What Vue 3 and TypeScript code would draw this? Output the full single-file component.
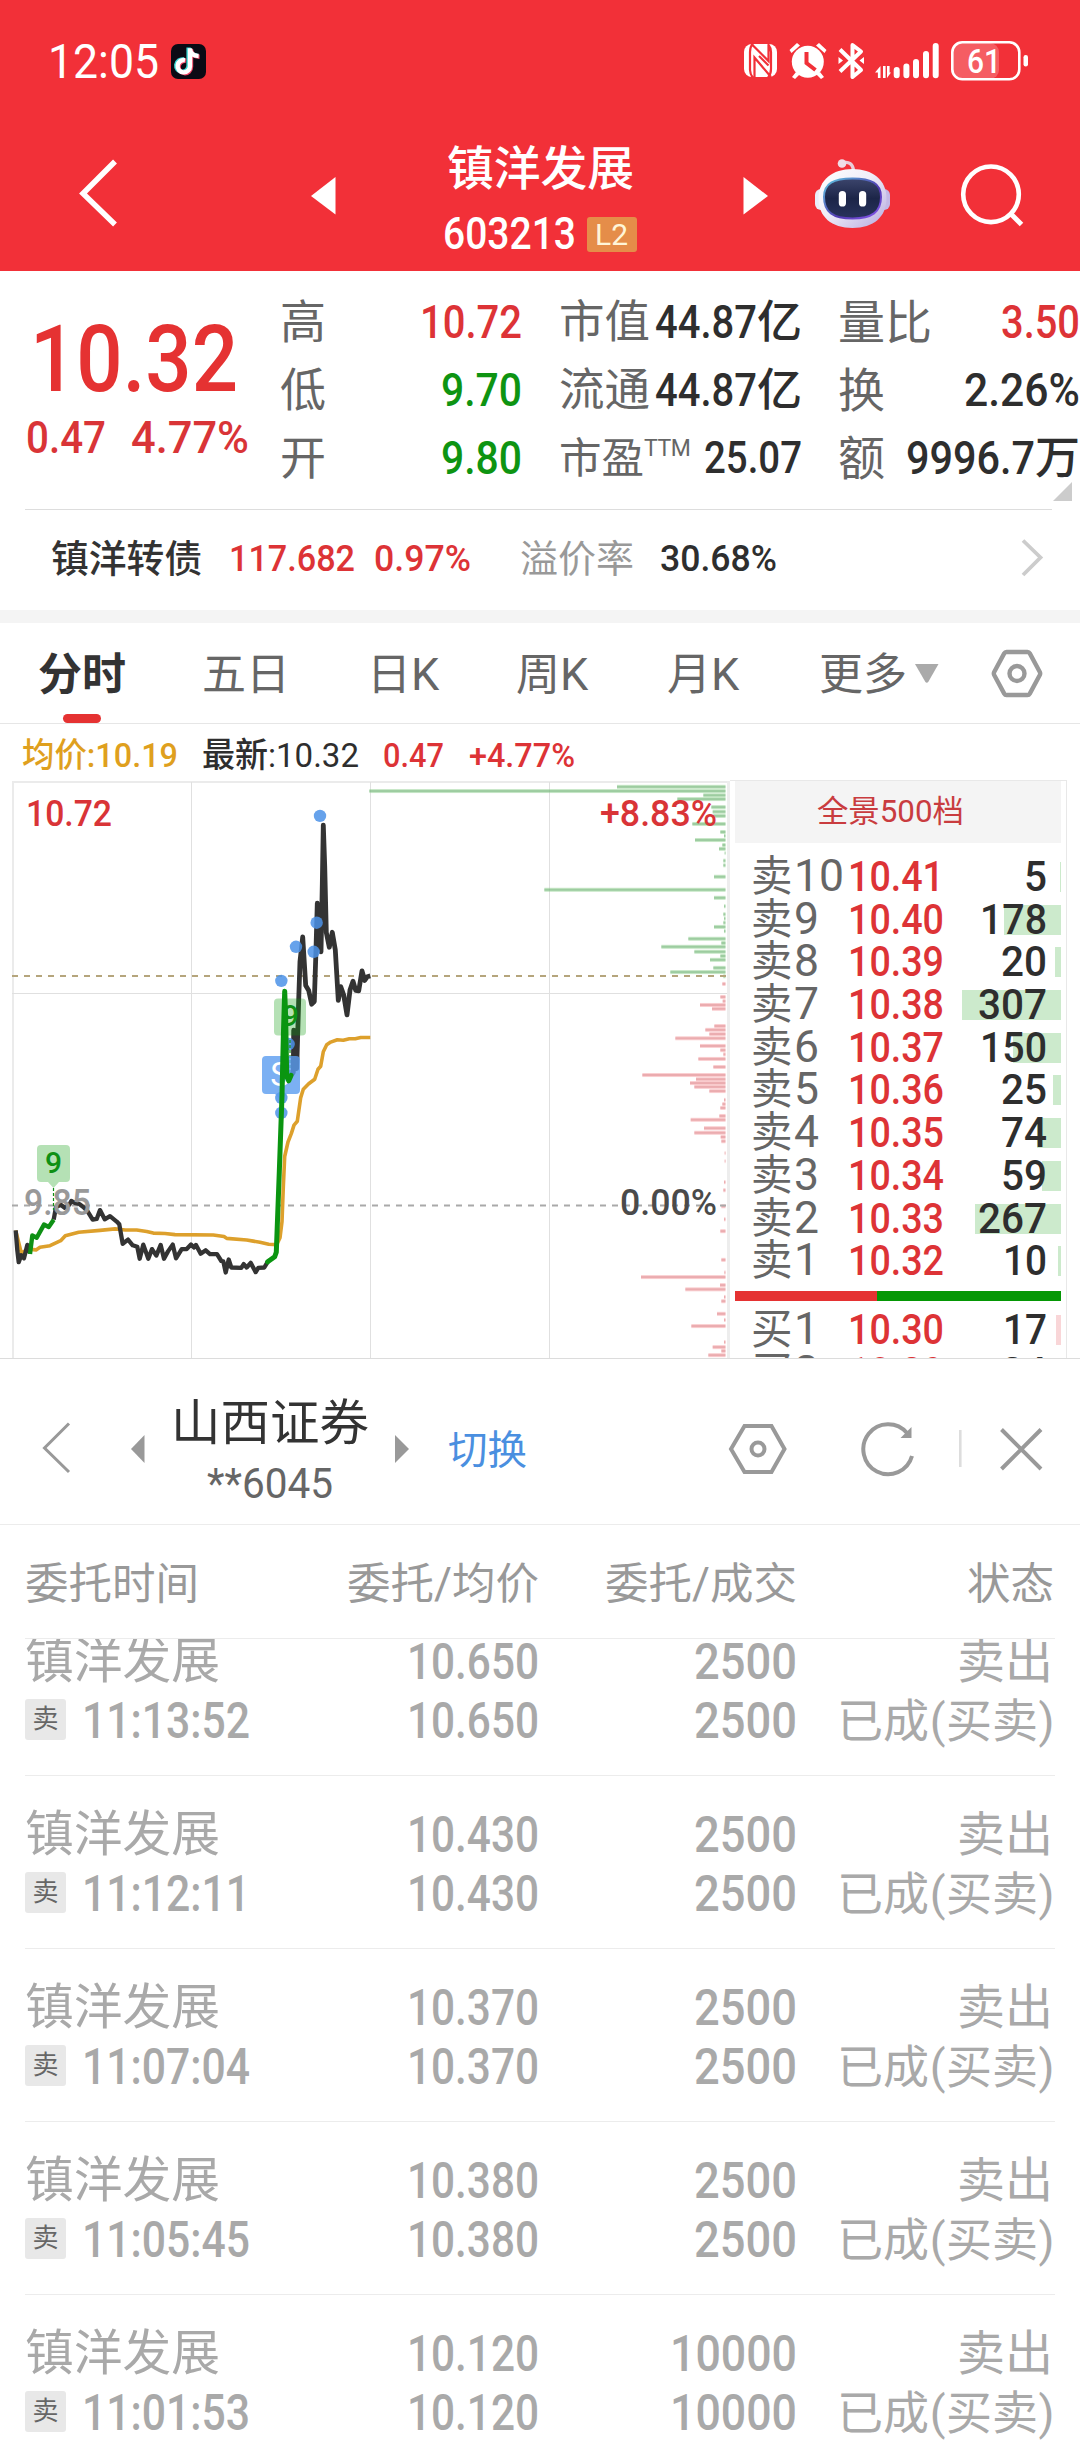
<script setup lang="ts">
interface Stat { label: string; value: string; width: number; tone: string; unit?: string; sup?: string; size?: number }
interface Level { side: string; no: string; noWidth: number; price: string; qty: string; qtyWidth: number; bar: number }
interface Order { time: string; price: string; qty: string; priceWidth: number; qtyWidth: number }

// Condenses a run of text horizontally so that it takes exactly the given width.
const vFit = {
  mounted(el: HTMLElement, binding: { value: number }) {
    const natural = el.getBoundingClientRect().width
    el.style.transform = `scaleX(${binding.value / natural})`
    el.style.marginRight = `${binding.value - natural}px`
  },
}

const columns: Stat[][] = [
  [
    { label: '高', value: '10.72', width: 102, tone: 'up' },
    { label: '低', value: '9.70', width: 81, tone: 'down' },
    { label: '开', value: '9.80', width: 81, tone: 'down' },
  ],
  [
    { label: '市值', value: '44.87', width: 102, tone: 'flat', unit: '亿' },
    { label: '流通', value: '44.87', width: 102, tone: 'flat', unit: '亿' },
    { label: '市盈', value: '25.07', width: 98, tone: 'flat', sup: 'TTM', size: 44 },
  ],
  [
    { label: '量比', value: '3.50', width: 79, tone: 'up' },
    { label: '换', value: '2.26%', width: 116, tone: 'flat' },
    { label: '额', value: '9996.7', width: 129, tone: 'flat', unit: '万' },
  ],
]

const sells: Level[] = [
  { side: '卖', no: '10', noWidth: 50, price: '10.41', qty: '5', qtyWidth: 23, bar: 1 },
  { side: '卖', no: '9', noWidth: 25, price: '10.40', qty: '178', qtyWidth: 67, bar: 57 },
  { side: '卖', no: '8', noWidth: 25, price: '10.39', qty: '20', qtyWidth: 46, bar: 6 },
  { side: '卖', no: '7', noWidth: 25, price: '10.38', qty: '307', qtyWidth: 69, bar: 99 },
  { side: '卖', no: '6', noWidth: 25, price: '10.37', qty: '150', qtyWidth: 67, bar: 48 },
  { side: '卖', no: '5', noWidth: 25, price: '10.36', qty: '25', qtyWidth: 46, bar: 8 },
  { side: '卖', no: '4', noWidth: 25, price: '10.35', qty: '74', qtyWidth: 46, bar: 24 },
  { side: '卖', no: '3', noWidth: 25, price: '10.34', qty: '59', qtyWidth: 46, bar: 19 },
  { side: '卖', no: '2', noWidth: 25, price: '10.33', qty: '267', qtyWidth: 69, bar: 86 },
  { side: '卖', no: '1', noWidth: 25, price: '10.32', qty: '10', qtyWidth: 44, bar: 3 },
]
const buys: Level[] = [
  { side: '买', no: '1', noWidth: 25, price: '10.30', qty: '17', qtyWidth: 44, bar: 5 },
  { side: '买', no: '2', noWidth: 25, price: '10.29', qty: '24', qtyWidth: 46, bar: 8 },
]

const orders: Order[] = [
  { time: '11:13:52', price: '10.650', qty: '2500', priceWidth: 132, qtyWidth: 103 },
  { time: '11:12:11', price: '10.430', qty: '2500', priceWidth: 132, qtyWidth: 103 },
  { time: '11:07:04', price: '10.370', qty: '2500', priceWidth: 132, qtyWidth: 103 },
  { time: '11:05:45', price: '10.380', qty: '2500', priceWidth: 132, qtyWidth: 103 },
  { time: '11:01:53', price: '10.120', qty: '10000', priceWidth: 132, qtyWidth: 127 },
]

// Chart samples are stored on a 3 : 2.613 grid and scaled down when drawn.
const sx = (x: number) => x / 3
const sy = (y: number) => y / 2.613 - 10
const toPath = (src: string) =>
  src.split(' ').map((p) => {
    const [x, y] = p.split(',').map(Number)
    return `${sx(x).toFixed(1)},${sy(y).toFixed(1)}`
  }).join(' ')

const earlyLine = toPath('47,1203 52,1255 56,1286 64,1268 72,1276 82,1241 90,1262')
const greenStart = toPath('90,1265 97,1216 110,1222 132,1188 146,1194 161,1175')
const middleLine = toPath('161,1175 168,1142 182,1136 194,1144 208,1136 214,1126 224,1131 238,1134 250,1142 262,1152 278,1175 290,1173 300,1150 314,1174 330,1166 350,1180 358,1187 368,1238 384,1227 398,1242 412,1246 419,1277 430,1240 445,1277 456,1252 469,1269 482,1241 492,1277 504,1258 518,1240 528,1276 545,1252 560,1252 573,1240 582,1248 588,1241 602,1264 617,1255 630,1265 651,1265 664,1283 670,1284 677,1313 686,1279 694,1300 724,1301 731,1291 740,1300 752,1288 767,1312 775,1301 793,1300 803,1285')
const greenRise = toPath('803,1285 824,1272 829,1260 838,1050 846,850 850,700 854,578 857,650 860,800 866,812 873,798')
const lateLine = toPath('875,796 880,790 881,680 886,700 890,780 896,600 900,500 908,436 917,563 926,576 935,612 943,605 948,470 952,348 957,400 963,475 967,300 970,144 974,250 979,425 988,463 997,424 1006,470 1015,602 1022,566 1031,588 1041,640 1050,575 1059,552 1067,576 1076,577 1086,525 1094,550 1102,540 1111,538')
const avgLine = toPath('47,1203 64,1262 85,1252 108,1254 120,1247 150,1243 182,1230 196,1217 236,1208 300,1203 345,1199 376,1202 410,1202 440,1206 460,1210 495,1211 525,1214 640,1215 672,1219 680,1224 740,1228 760,1231 780,1234 806,1239 830,1240 840,1222 846,1180 850,1090 854,1010 864,972 874,950 882,928 892,918 902,856 910,834 926,820 944,808 954,782 962,774 970,736 980,718 992,711 1012,705 1030,706 1048,702 1066,702 1082,699 1111,699')

const dots = [[960, 120], [950, 399], [941, 475], [888, 462], [844, 551], [866, 716], [844, 857], [844, 896]]

const greenBars = [[741, 44], [-2, 55], [1000, 66], [922, 76], [1024, 97], [1028, 109], [1030, 120], [967, 141], [1051, 162], [1062, 172], [975, 183], [1057, 196], [1047, 206], [1064, 217], [1060, 237], [1060, 249], [1032, 279], [523, 313], [1032, 334], [1062, 356], [1060, 377], [1062, 388], [1060, 399], [1032, 410], [1062, 421], [955, 441], [1054, 452], [874, 462], [973, 475], [1051, 486], [1020, 496], [1030, 517], [901, 528], [1060, 539]]
const redBars = [[1057, 559], [1051, 593], [1058, 604], [990, 614], [1026, 624], [1033, 669], [1006, 679], [1018, 690], [916, 701], [990, 721], [1051, 732], [1060, 743], [985, 755], [1030, 776], [817, 797], [978, 808], [960, 818], [973, 828], [1018, 839], [1062, 862], [1057, 873], [1051, 883], [1048, 904], [962, 914], [1002, 936], [973, 948], [1052, 959], [1054, 970], [1064, 1001], [1064, 1022], [1062, 1077], [1060, 1098], [1054, 1140], [1062, 1174], [1051, 1205], [1054, 1280], [1063, 1313], [813, 1325], [1050, 1346], [946, 1357], [1062, 1377], [1054, 1388], [1041, 1421], [1062, 1437], [964, 1453], [1062, 1495], [1028, 1508], [1054, 1518], [1015, 1529]]
const barX = (x: number) => 370 + x / 3
</script>

<template>
  <div class="page">
    <header class="top">
      <div class="status">
        <span class="clock"><span v-fit="111" class="fit">12:05</span></span>
        <svg class="tiktok" width="36" height="36" viewBox="0 0 36 36">
          <rect width="35" height="35" rx="7" fill="#0b0a14" />
          <g fill="none" stroke-width="4.4">
            <path d="M18.4 4V22a6.2 6.2 0 1 1-5-6.1M18.4 5c.6 4.6 4 6.6 8.6 6.8" stroke="#39d7d4" transform="translate(-.8 -.4)" />
            <path d="M18.4 4V22a6.2 6.2 0 1 1-5-6.1M18.4 5c.6 4.6 4 6.6 8.6 6.8" stroke="#ef4565" transform="translate(1.6 1)" />
            <path d="M18.4 4V22a6.2 6.2 0 1 1-5-6.1M18.4 5c.6 4.6 4 6.6 8.6 6.8" stroke="#fff" transform="translate(.6 .2)" />
          </g>
        </svg>
        <svg class="sys" width="290" height="44" viewBox="740 39 290 44">
          <rect x="744" y="44" width="33" height="33" rx="8" fill="#fff" />
          <g stroke="#f13038" fill="none" stroke-width="2.2">
            <path d="M753 43q-3 4-3 9v18q0 4 3 8M752 44.500L768.500 61V45M768 78q3-4 3-9V52q0-4-3-8M754.500 78V57.500L771 77" />
            <path d="M759 56l9.500 9.500" />
          </g>
          <g fill="#fff">
            <circle cx="807.8" cy="61.8" r="16" />
            <path d="M789.500 50l7.500-7 3 2.500-8.500 7.500zM826.500 50l-7.500-7-3 2.500 8.500 7.500z" />
            <path d="M796 72l-4 5 3 2 5-5zM820 72l4 5-3 2-5-5z" />
          </g>
          <path d="M806.500 52v11l9 7" fill="none" stroke="#f13038" stroke-width="4" />
          <g fill="none" stroke="#fff" stroke-width="4" stroke-linejoin="round">
            <path d="M840 49.500l21 20.500-8.500 7V45l8.500 6.500-21 20" />
          </g>
          <path d="M838.500 57v7l4.500-3.500zM864 57v7l-4.500-3.500z" fill="#fff" />
          <path d="M880.500 66v12h-2.600v-5.500H875zM883 66h2.600v12H883zM887 66h2.600v6.500h1.400l-4 5.500z" fill="#fff" />
          <g stroke="#fff" stroke-width="6" stroke-linecap="round">
            <path d="M896.700 70v5.300M906.400 66.500v8.800M916 62v13.300M926 54v21.300M935.700 46v29.300" />
          </g>
          <rect x="953" y="43" width="46" height="36" rx="9" fill="#fff" opacity=".22" />
          <rect x="952.300" y="42.300" width="67" height="37" rx="10" fill="none" stroke="#fff" stroke-width="2.600" />
          <rect x="1023.500" y="55" width="4.500" height="11.500" rx="2.200" fill="#fff" />
          <text x="967" y="72.600" class="batt" textLength="34" lengthAdjust="spacingAndGlyphs">61</text>
        </svg>
      </div>
      <div class="nav">
        <svg class="nav-back" width="40" height="72" viewBox="0 0 40 72"><path d="M37 4.500L5 36.500l32 31" fill="none" stroke="#fff" stroke-width="5.500" /></svg>
        <svg class="nav-prev" width="25" height="38" viewBox="0 0 25 38"><path d="M24.500 0v37.500L0 19z" fill="#fff" /></svg>
        <div class="title">
          <div class="title-name"><span v-fit="187" class="fit">镇洋发展</span></div>
          <div class="title-code">
            <span v-fit="133" class="fit">603213</span>
            <span class="l2"><span v-fit="33" class="fit">L2</span></span>
          </div>
        </div>
        <svg class="nav-next" width="25" height="38" viewBox="0 0 25 38"><path d="M.5 0v37.500L25 19z" fill="#fff" /></svg>
        <svg class="robot" width="78" height="72" viewBox="814 158 78 72">
          <defs>
            <linearGradient id="shell" x1="0" y1="0" x2="1" y2="1"><stop offset="0" stop-color="#fff" /><stop offset=".45" stop-color="#f0eef8" /><stop offset="1" stop-color="#b5a9df" /></linearGradient>
            <linearGradient id="rim" x1="0" y1="0" x2="1" y2="1"><stop offset="0" stop-color="#5fc8e0" /><stop offset=".6" stop-color="#5138b0" /><stop offset="1" stop-color="#8a5af0" /></linearGradient>
            <linearGradient id="face" x1="0" y1="0" x2="0" y2="1"><stop offset="0" stop-color="#3c456c" /><stop offset=".5" stop-color="#1c2548" /><stop offset="1" stop-color="#28335c" /></linearGradient>
          </defs>
          <path d="M842 163c7-2 11 1 11.500 8" fill="none" stroke="#e9cdd9" stroke-width="3.400" />
          <circle cx="842" cy="163.500" r="4.300" fill="#f0dde6" />
          <rect x="815" y="189" width="14" height="21" rx="6" fill="#e9edfa" />
          <rect x="876" y="189" width="14" height="21" rx="6" fill="#c3b8e6" />
          <path d="M852.500 169c20 0 34 11 34 29 0 19-13 30-34 30s-34-11-34-30c0-18 14-29 34-29z" fill="url(#shell)" />
          <path d="M852.500 178.500c19 0 28.500 5 28.500 18.500 0 15-9 21.500-28.500 21.500S824 212 824 197c0-13.500 9.500-18.500 28.500-18.500z" fill="url(#face)" stroke="url(#rim)" stroke-width="2" />
          <rect x="838.800" y="191" width="7.200" height="15.500" rx="3.600" fill="#fff" />
          <rect x="859" y="191" width="7.200" height="15.500" rx="3.600" fill="#fff" />
        </svg>
        <svg class="search" width="66" height="66" viewBox="959 162 66 66"><circle cx="991" cy="194.300" r="27.800" fill="none" stroke="#fff" stroke-width="4.600" /><path d="M1010.500 213.500l11 11" stroke="#fff" stroke-width="5" /></svg>
      </div>
    </header>

    <section class="quote">
      <div class="last">
        <div class="last-price"><span v-fit="208" class="fit">10.32</span></div>
        <div class="last-change"><span v-fit="80" class="fit">0.47</span><span v-fit="118" class="fit pct">4.77%</span></div>
      </div>
      <div v-for="(col, c) in columns" :key="c" class="stats" :class="'stats-' + c">
        <div v-for="s in col" :key="s.label" class="stat">
          <span class="stat-label" :class="{ small: s.sup }">{{ s.label }}<sup v-if="s.sup">{{ s.sup }}</sup></span>
          <span class="stat-value" :class="s.tone" :style="{ fontSize: (s.size ?? 46.5) + 'px' }">
            <span v-fit="s.width" class="fit">{{ s.value }}</span><i v-if="s.unit">{{ s.unit }}</i>
          </span>
        </div>
      </div>
      <svg class="corner" width="19" height="19" viewBox="0 0 19 19"><path d="M19 0v19H0z" fill="#ccc" /></svg>
    </section>

    <section class="bond">
      <span class="bond-name">镇洋转债</span>
      <span v-fit="126" class="fit bond-num up bond-a">117.682</span>
      <span v-fit="97" class="fit bond-num up bond-b">0.97%</span>
      <span class="bond-rate">溢价率</span>
      <span v-fit="117" class="fit bond-num flat bond-c">30.68%</span>
      <svg class="bond-go" width="24" height="40" viewBox="0 0 24 40"><path d="M3 2.500l17.500 17L3 37" fill="none" stroke="#ccc" stroke-width="3.800" /></svg>
    </section>

    <nav class="tabs">
      <span class="tab active">分时</span>
      <span class="tab t2">五日</span>
      <span class="tab t3">日<b>K</b></span>
      <span class="tab t4">周<b>K</b></span>
      <span class="tab t5">月<b>K</b></span>
      <span class="tab t6">更多<svg width="24" height="20" viewBox="0 0 24 20"><path d="M0 0h23.500L13.500 17.500q-1.700 2.500-3.400 0z" fill="#aaa" /></svg></span>
      <svg class="gear" width="52" height="50" viewBox="0 0 52 50"><path d="M15.500 3h21q1.500 0 2.300 1.400l10 18.500q.8 1.600 0 3.200l-10 18.500Q38 46 36.500 46h-21q-1.500 0-2.300-1.400l-10-18.500q-.8-1.600 0-3.200l10-18.500Q14 3 15.500 3z" fill="none" stroke="#999" stroke-width="4.400" /><circle cx="26" cy="24.500" r="7.500" fill="none" stroke="#999" stroke-width="4.400" /></svg>
    </nav>

    <div class="info">
      <span v-fit="156" class="fit gold">均价:10.19</span>
      <span v-fit="157" class="fit flat i2">最新:10.32</span>
      <span v-fit="61" class="fit up i3">0.47</span>
      <span v-fit="106" class="fit up i4">+4.77%</span>
    </div>

    <section class="market">
      <svg class="chart" width="730" height="578" viewBox="0 0 730 578">
        <g stroke="#e0e0e0" stroke-width="1">
          <path d="M12 2H728M13 1V578" stroke="#ebebeb" stroke-width="2" />
          <path d="M191.500 2V578M370.500 2V578M549.500 2V578M12 213.500H728" />
          <path d="M728.500 1V578" stroke="#ededed" stroke-width="3" />
        </g>
        <g v-for="b in greenBars" :key="'g' + b[1]">
          <rect :x="barX(b[0])" :y="sy(b[1]) - 2" :width="355.500 - b[0] / 3" height="4" fill="#8fd08f" opacity=".5" />
          <rect :x="barX(b[0])" :y="sy(b[1]) - 1" :width="355.500 - b[0] / 3" height="2" fill="#5fa566" opacity=".4" />
        </g>
        <g v-for="b in redBars" :key="'r' + b[1]">
          <rect :x="barX(b[0])" :y="sy(b[1]) - 2" :width="355.500 - b[0] / 3" height="4" fill="#f5a0a4" opacity=".5" />
          <rect :x="barX(b[0])" :y="sy(b[1]) - 1" :width="355.500 - b[0] / 3" height="2" fill="#cf6b70" opacity=".35" />
        </g>
        <path d="M12 196H726" stroke="#b5a57c" stroke-width="2" stroke-dasharray="6 6" />
        <path d="M12 425.500H726" stroke="#a9a9a9" stroke-width="2" stroke-dasharray="6 6" />
        <text x="26" y="46" class="axis up" textLength="86" lengthAdjust="spacingAndGlyphs">10.72</text>
        <text x="600" y="46" class="axis up" textLength="117" lengthAdjust="spacingAndGlyphs">+8.83%</text>
        <text x="620" y="435" class="axis dim" textLength="97" lengthAdjust="spacingAndGlyphs">0.00%</text>
        <g fill="none" stroke-linejoin="round" stroke-linecap="butt">
          <polyline :points="avgLine" stroke="#dda02c" stroke-width="3.600" />
          <g stroke="#333" stroke-width="4.300">
            <polyline :points="earlyLine" />
            <polyline :points="middleLine" />
            <polyline :points="lateLine" stroke-width="4.800" />
          </g>
          <polyline :points="greenStart" stroke="#0e9014" stroke-width="4.400" />
        </g>
        <text x="24" y="435" class="axis gray" textLength="67" lengthAdjust="spacingAndGlyphs">9.85</text>
        <ellipse v-for="d in dots" :key="d.join()" :cx="sx(d[0])" :cy="sy(d[1])" rx="6.200" ry="6.200" fill="#4b92e8" opacity=".85" />
        <path d="M53.500 408V430M290 260V300" stroke="#0e9014" stroke-width="1.200" stroke-dasharray="3 2" />
        <g fill="#0a9a0a" fill-opacity=".3">
          <path d="M41 365h25q4 0 4 4v29q0 4-4 4h-7l-5.500 6-5.500-6h-7q-4 0-4-4v-29q0-4 4-4z" />
          <rect x="274" y="218.500" width="32" height="37" rx="4" />
        </g>
        <text x="53.500" y="392.500" class="mark green">9</text>
        <text x="290.500" y="245.500" class="mark green">9</text>
        <path d="M266 276h30q4 0 4 4v30q0 4-4 4h-9l-6 6-6-6h-9q-4 0-4-4v-30q0-4 4-4z" fill="#5a9cf0" opacity=".8" />
        <text x="280" y="306" class="mark sell">S</text>
        <polyline :points="greenRise" fill="none" stroke="#0a9510" stroke-width="5" stroke-linejoin="round" stroke-linecap="round" />
      </svg>

      <div class="book">
        <div class="book-head"><span v-fit="147" class="fit">全景500档</span></div>
        <div class="levels">
          <div v-for="l in sells" :key="l.no" class="level">
            <span class="lv-name">{{ l.side }}<b v-fit="l.noWidth" class="fit">{{ l.no }}</b></span>
            <span class="lv-price"><span v-fit="96" class="fit">{{ l.price }}</span></span>
            <span class="lv-bar" :style="{ width: l.bar + 'px' }"></span>
            <span class="lv-qty"><span v-fit="l.qtyWidth" class="fit">{{ l.qty }}</span></span>
          </div>
        </div>
        <div class="ratio"><i></i></div>
        <div class="levels buys">
          <div v-for="l in buys" :key="l.no" class="level">
            <span class="lv-name">{{ l.side }}<b v-fit="l.noWidth" class="fit">{{ l.no }}</b></span>
            <span class="lv-price"><span v-fit="96" class="fit">{{ l.price }}</span></span>
            <span class="lv-bar buy" :style="{ width: l.bar + 'px' }"></span>
            <span class="lv-qty"><span v-fit="l.qtyWidth" class="fit">{{ l.qty }}</span></span>
          </div>
        </div>
      </div>
    </section>

    <section class="broker">
      <svg class="bk-back" width="30" height="54" viewBox="0 0 30 54"><path d="M28 2.500L3.500 27 28 51" fill="none" stroke="#999" stroke-width="3" /></svg>
      <svg class="bk-prev" width="14" height="28" viewBox="0 0 14 28"><path d="M13.500 0v28L0 14z" fill="#999" /></svg>
      <div class="bk-name">
        <div class="bk-title"><span v-fit="198" class="fit">山西证券</span></div>
        <div class="bk-acct"><span v-fit="126" class="fit">**6045</span></div>
      </div>
      <svg class="bk-next" width="14" height="28" viewBox="0 0 14 28"><path d="M0 0v28L14 14z" fill="#999" /></svg>
      <span class="bk-switch">切换</span>
      <svg class="bk-tools" width="320" height="60" viewBox="727 1419 320 60">
        <g fill="none" stroke="#999" stroke-width="4">
          <path d="M744.500 1426h27l13 23-13 23h-27l-13.500-23z" />
          <circle cx="758" cy="1449" r="6.500" />
          <path d="M912 1456a24.800 25 0 1 1-5-23" />
          <path d="M1001.500 1429.500l39.500 39.500M1041 1429.500l-39.500 39.500" />
        </g>
        <path d="M911.500 1427v11h-11z" fill="#999" />
        <path d="M960.300 1430v37" stroke="#ddd" stroke-width="2.600" />
      </svg>
    </section>

    <div class="thead">
      <span class="c1">委托时间</span>
      <span class="c2">委托/均价</span>
      <span class="c3">委托/成交</span>
      <span class="c4">状态</span>
    </div>

    <div class="orders">
      <div v-for="o in orders" :key="o.time" class="order">
        <div class="line">
          <span class="c1 stock"><span v-fit="195" class="fit">镇洋发展</span></span>
          <span class="c2"><span v-fit="o.priceWidth" class="fit">{{ o.price }}</span></span>
          <span class="c3"><span v-fit="o.qtyWidth" class="fit">{{ o.qty }}</span></span>
          <span class="c4 act">卖出</span>
        </div>
        <div class="line second">
          <span class="c1"><i class="tag">卖</i><span v-fit="168" class="fit">{{ o.time }}</span></span>
          <span class="c2"><span v-fit="o.priceWidth" class="fit">{{ o.price }}</span></span>
          <span class="c3"><span v-fit="o.qtyWidth" class="fit">{{ o.qty }}</span></span>
          <span class="c4 done">已成<em>(</em>买卖<em>)</em></span>
        </div>
      </div>
    </div>
  </div>
</template>

<style>
body { background: #fff; }
</style>

<style scoped>
* { box-sizing: border-box; }
i, em { font-style: normal; }
svg { display: block; flex: none; }
.page {
  width: 1080px; height: 2440px; overflow: hidden; background: #fff; display: flex; flex-direction: column;
  font-family: Roboto, "Noto Sans CJK SC", sans-serif; color: #333; white-space: nowrap;
}
.page > * { flex: none; }
.fit { display: inline-block; transform-origin: 0 50%; white-space: nowrap; }
.up { color: #dd3336; fill: #d93437; }
.down { color: #0e9412; }
.flat { color: #2e2e2e; }

.top { height: 271px; background: #f23038; color: #fff; }
.status { height: 123px; display: flex; align-items: center; padding-left: 48px; }
.clock { font-size: 47.500px; line-height: 50px; width: 123px; font-weight: 450; padding-top: 1px; }
.sys { margin-left: 533px; margin-top: -1px; }
.batt { font: 500 34px Roboto, sans-serif; fill: #fff; }
.nav { height: 148px; display: flex; }
.nav-back { margin: 34px 0 0 78px; }
.nav-prev { margin: 54px 0 0 193px; }
.title { width: 407px; display: flex; flex-direction: column; align-items: center; }
.title-name { margin-top: 16px; font-size: 47px; line-height: 60px; font-weight: 500; padding-left: 2px; }
.title-code { margin-top: 5px; font-size: 44px; line-height: 60px; font-weight: 500; display: flex; align-items: center; }
.l2 { margin-left: 11px; width: 50px; height: 35px; border-radius: 3px; background: #e58d49; color: #fff5d8; font-size: 29px; line-height: 36px; font-weight: 400; text-align: center; }
.nav-next { margin: 54px 0 0 0; }
.robot { margin: 35px 0 0 46px; }
.search { margin: 39px 0 0 67px; }

.quote { height: 239px; display: flex; position: relative; }
.quote::after { content: ""; position: absolute; left: 25px; bottom: 0; width: 1027px; height: 1px; background: #ddd; }
.last { width: 280px; padding-left: 25px; }
.last-price { margin: 39px 0 0 5px; height: 100px; line-height: 100px; font-size: 93px; font-weight: 500; color: #e53232; }
.last-change { height: 60px; margin-top: -2px; line-height: 60px; font-size: 45px; font-weight: 500; color: #d93437; padding-left: 1px; }
.pct { margin-left: 25px; }
.stats { padding-top: 18px; }
.stats-0 { width: 242px; }
.stats-1 { width: 243px; margin-left: 37px; }
.stats-2 { width: 242px; margin-left: 36px; }
.stat { height: 67.700px; display: flex; justify-content: space-between; align-items: center; line-height: 67px; }
.stat-label { font-size: 46px; color: #666; }
.stats-1 .stat-label { font-size: 45.500px; }
.stats-1 .stat-label.small { font-size: 42.500px; }
.stats-2 .stat-label { font-size: 47px; }
sup { font-size: 23px; line-height: 1; vertical-align: 17px; font-weight: 400; letter-spacing: -.5px; }
.stat-value { font-weight: 500; display: flex; }
.stat-value i { font-size: 45px; font-weight: 500; }
.corner { position: absolute; right: 8px; bottom: 9px; }

.bond { height: 100px; padding: 0 36px 5px 51px; display: flex; align-items: center; }
.bond-name { font-size: 37.800px; width: 178px; font-weight: 500; margin-top: -4px; }
.bond-num { font-size: 37.500px; font-weight: 500; padding-top: 1px; }
.bond-b { margin-left: 19px; }
.bond-rate { font-size: 38px; color: #999; margin: -4px 0 0 49px; width: 140px; }
.bond-go { margin-left: auto; }

.tabs { height: 114px; border-top: 13px solid #f4f4f4; border-bottom: 1px solid #e6e6e6; display: flex; align-items: center; font-size: 44px; color: #666; line-height: 60px; padding-top: 3px; }
.tab { position: relative; }
.tab b { font-weight: 400; font-size: 45px; }
.active { margin-left: 38px; width: 164px; color: #333; font-weight: 700; }
.active::after { content: ""; position: absolute; left: 25px; top: 69px; width: 38px; height: 9px; border-radius: 5px; background: #e53232; }
.t2 { width: 165px; }
.t3 { width: 149px; }
.t4 { width: 151px; }
.t5 { width: 152px; }
.t6 { width: 172px; display: flex; align-items: center; }
.t6 svg { margin-left: 8px; margin-top: -2px; }
.gear { margin-top: -2px; }

.info { height: 56px; padding: 6px 0 0 22px; display: flex; align-items: center; font-size: 34px; line-height: 44px; font-weight: 500; }
.gold { color: #dfa01e; }
.i2 { margin-left: 24px; font-weight: 450; }
.i3 { margin-left: 24px; }
.i4 { margin-left: 25px; }

.market { height: 579px; border-bottom: 1px solid #dcdcdc; display: flex; overflow: hidden; }
.axis { font: 500 37px Roboto, sans-serif; }
.dim { fill: #4a4a4a; }
.gray { fill: #999; }
.mark { font: 500 30px Roboto, sans-serif; text-anchor: middle; }
.green { fill: #0e9014; }
.sell { fill: #fff; font-size: 33px; font-weight: 400; }
.book { width: 337px; border-top: 1px solid #e8e8e8; border-right: 1px solid #e8e8e8; padding: 0 5px; }
.book-head { height: 62px; background: #f4f4f4; color: #c93c3f; font-size: 31px; line-height: 61px; padding-left: 82px; }
.levels { padding-top: 12px; }
.level { height: 42.700px; line-height: 42.700px; position: relative; display: flex; font-size: 43px; }
.lv-name { width: 113px; padding-left: 16px; font-size: 41.500px; color: #666; }
.lv-name b { font-weight: 400; font-size: 44px; margin-left: 1px; }
.lv-price { color: #dd3336; font-weight: 500; }
.lv-qty { position: absolute; right: 14px; top: 0; font-weight: 500; color: #2e2e2e; }
.lv-bar { position: absolute; right: 0; top: 7px; height: 30px; background: #cceacc; }
.lv-bar.buy { background: #f9d6d8; }
.ratio { margin-top: 9px; height: 10px; background: #059705; display: flex; }
.ratio i { width: 142px; background: #e53232; }
.buys { padding-top: 7px; }

.broker { height: 166px; border-bottom: 1px solid #ececec; display: flex; align-items: center; padding-left: 41px; }
.bk-back { margin-top: 12px; }
.bk-prev { margin: 15px 0 0 60px; }
.bk-name { width: 250px; text-align: center; padding-top: 22px; }
.bk-title { font-size: 49px; line-height: 56px; color: #333; }
.bk-acct { font-size: 42px; line-height: 50px; margin-top: 7px; color: #666; }
.bk-next { margin-top: 15px; }
.bk-switch { font-size: 39.500px; color: #4a8fe0; margin: 9px 0 0 39px; width: 279px; }
.bk-tools { margin-top: 14px; }

.thead { height: 114px; margin: 0 25px; padding-bottom: 3px; border-bottom: 1px solid #ececec; display: flex; align-items: center; font-size: 43.500px; color: #999; }
.c1 { width: 254px; display: flex; align-items: center; }
.c2 { width: 260px; text-align: right; }
.c3 { width: 258px; text-align: right; }
.c4 { flex: 1; text-align: right; padding-right: 1px; }
.orders { flex: 1 1 0 !important; overflow: hidden; padding: 0 25px; color: #a9a9a9; min-height: 0; }
.order { height: 173px; padding-top: 29px; border-bottom: 1px solid #ececec; }
.order:first-child { margin-top: -36px; }
.line { height: 60px; line-height: 60px; display: flex; font-size: 50px; font-weight: 500; }
.second { margin-top: -1px; }
.line .stock { font-size: 48.500px; font-weight: 400; }
.line .act { font-size: 48px; font-weight: 400; padding-right: 2px; }
.line .done { font-size: 46px; font-weight: 400; padding-right: 0; }
.done em { display: inline-block; width: 17px; text-align: center; }
.tag { width: 41px; height: 41px; border-radius: 3px; background: #e8e8e8; color: #666; font-size: 26px; font-weight: 400; line-height: 41px; text-align: center; margin-right: 16px; margin-top: -4px; }
</style>
